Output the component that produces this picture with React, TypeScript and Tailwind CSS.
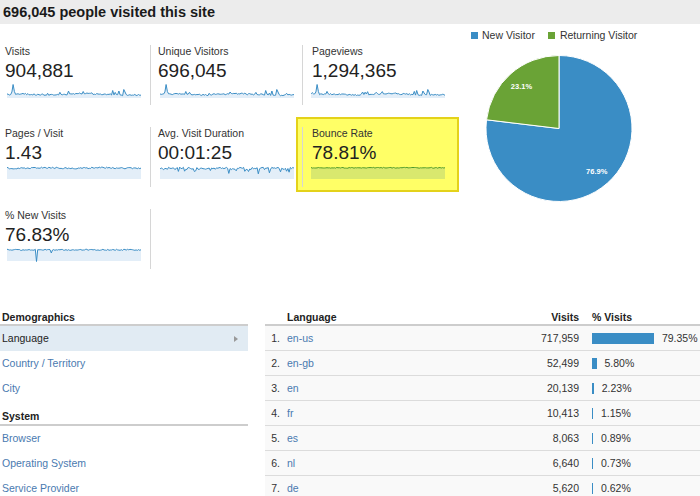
import React from "react";

function rng(seed: number) {
  let s = seed;
  return () => {
    s = (s * 16807) % 2147483647;
    return (s - 1) / 2147483646;
  };
}

type Kind = "low" | "high" | "noisy" | "flat" | "dip";

function makeSeries(kind: Kind, seed: number): number[] {
  const r = rng(seed);
  const n = 110;
  const out: number[] = [];
  for (let i = 0; i < n; i++) {
    let y = 0;
    if (kind === "low") {
      y = 10.6 + (r() - 0.5) * 1.4 - Math.sin(i / 9) * 0.5;
      if (i > 40 && i < 70) y -= 0.8;
      if (r() > 0.94) y -= 1.5 + r() * 1.5;
    } else if (kind === "high") {
      y = 2 + (r() - 0.5) * 1.4 + Math.sin(i / 7) * 0.3;
    } else if (kind === "noisy") {
      y = 2.4 + (r() - 0.5) * 2.6;
      if (r() > 0.9) y += 2 + r() * 2.5;
    } else if (kind === "flat") {
      y = 1.8 + (r() - 0.5) * 0.8;
    } else {
      y = 1.8 + (r() - 0.5) * 1.2;
    }
    out.push(y);
  }
  if (kind === "low") {
    out[4] = 8;
    out[5] = 0.5;
    out[6] = 7.5;
    out[86] = 6.5;
    out[91] = 7;
    out[95] = 5.5;
    out[96] = 8;
  }
  if (kind === "dip") {
    out[24] = 13.5;
    out[36] = 5;
  }
  return out.map((v) => Math.max(0.5, Math.min(13.5, v)));
}

function Spark({ kind, seed, green, className }: { kind: Kind; seed: number; green?: boolean; className: string }) {
  const W = 134;
  const H = 14;
  const pts = makeSeries(kind, seed);
  const step = W / (pts.length - 1);
  const line = pts.map((y, i) => `${i ? "L" : "M"}${(i * step).toFixed(1)} ${y.toFixed(1)}`).join(" ");
  const area = `${line} L${W} ${kind === "low" ? H : 13} L0 ${kind === "low" ? H : 13} Z`;
  return (
    <svg width={W} height={H} className={className}>
      <path d={area} fill={green ? "#d9e86e" : "#e3eef8"} />
      <path d={line} fill="none" stroke={green ? "#4e9a2b" : "#3a8dc5"} strokeWidth={1} />
    </svg>
  );
}

type Cell = { label: string; value: string; kind: Kind; seed: number; green?: boolean };

function Metric({ cell, col }: { cell: Cell; col: number }) {
  const box =
    col === 0
      ? "relative h-[60px] w-[151px] border-r border-[#d6d6d6] pl-[5px]"
      : col === 1
      ? "relative h-[60px] w-[152px] border-r border-[#d6d6d6] pl-[7px]"
      : "relative h-[60px] w-[157px] pl-[9px]";
  return (
    <div className={box}>
      <div className="text-[10.5px] leading-[13px] text-[#333]">{cell.label}</div>
      <div className="text-[19px] leading-[26px] text-[#222]">{cell.value}</div>
      <Spark
        kind={cell.kind}
        seed={cell.seed}
        green={cell.green}
        className={col === 2 ? "ml-[-1px] block" : "ml-[2px] block"}
      />
    </div>
  );
}

const rows: Cell[][] = [
  [
    { label: "Visits", value: "904,881", kind: "low", seed: 11 },
    { label: "Unique Visitors", value: "696,045", kind: "low", seed: 23 },
    { label: "Pageviews", value: "1,294,365", kind: "low", seed: 37 },
  ],
  [
    { label: "Pages / Visit", value: "1.43", kind: "high", seed: 41 },
    { label: "Avg. Visit Duration", value: "00:01:25", kind: "noisy", seed: 53 },
    { label: "Bounce Rate", value: "78.81%", kind: "flat", seed: 67, green: true },
  ],
  [{ label: "% New Visits", value: "76.83%", kind: "dip", seed: 71 }],
];

const languages = [
  { name: "en-us", visits: "717,959", pct: 79.35 },
  { name: "en-gb", visits: "52,499", pct: 5.8 },
  { name: "en", visits: "20,139", pct: 2.23 },
  { name: "fr", visits: "10,413", pct: 1.15 },
  { name: "es", visits: "8,063", pct: 0.89 },
  { name: "nl", visits: "6,640", pct: 0.73 },
  { name: "de", visits: "5,620", pct: 0.62 },
];

function SideLink({ label }: { label: string }) {
  return <div className="flex h-[25px] items-center pl-[2px] text-[#4a7ab0]">{label}</div>;
}

export default function App() {
  return (
    <div className="h-[496px] w-[700px] overflow-hidden bg-white font-['Liberation_Sans',Arial,sans-serif] text-[10.5px] leading-[13px] text-[#222]">
      {/* Title bar */}
      <div className="flex h-[24px] items-center bg-[#ececec] pl-[3px] text-[14.5px] font-bold text-[#1a1a1a]">
        696,045 people visited this site
      </div>

      <div className="flex h-[283px]">
        {/* Metrics */}
        <div className="flex w-[460px] flex-col gap-[22px] pt-[21px]">
          {rows.map((row, ri) => (
            <div key={ri} className="relative flex">
              {ri === 1 && (
                <div className="absolute left-[296px] top-[-10px] h-[75px] w-[163px] border-2 border-[#e4d21a] bg-[#ffff66]" />
              )}
              {row.map((c, ci) => (
                <Metric key={c.label} cell={c} col={ci} />
              ))}
            </div>
          ))}
        </div>

        {/* Pie */}
        <div className="flex-1">
          <div className="flex items-center pl-[11px] pt-[5px] text-[#333]">
            <span className="mr-[4px] h-[7px] w-[7px] bg-[#3a8dc5]" />
            New Visitor
            <span className="ml-[13px] mr-[5px] h-[7px] w-[7px] bg-[#6aa336]" />
            Returning Visitor
          </div>
          <svg width={240} height={200} className="mt-[6px] block">
            <path d="M99 80.5 L99 7.5 A73 73 0 1 1 26.52 71.8 Z" fill="#3a8dc5" stroke="#fff" strokeWidth={1} />
            <path d="M99 80.5 L26.52 71.8 A73 73 0 0 1 99 7.5 Z" fill="#6aa336" stroke="#fff" strokeWidth={1} />
            <text x={61.5} y={41} fill="#fff" fontSize={7.5} fontWeight="bold" textAnchor="middle">
              23.1%
            </text>
            <text x={136.7} y={125.5} fill="#fff" fontSize={7.5} fontWeight="bold" textAnchor="middle">
              76.9%
            </text>
          </svg>
        </div>
      </div>

      <div className="flex">
        {/* Sidebar */}
        <div className="w-[248px]">
          <div className="h-[19px] border-b-2 border-[#cdcdcd] pl-[2px] pt-[4px] font-bold">Demographics</div>
          <div className="flex h-[25px] items-center justify-between bg-[#e1ebf3] pl-[2px] pr-[10px] text-[#222]">
            Language
            <svg width={4} height={6}>
              <polygon points="0,0 4,3 0,6" fill="#999" />
            </svg>
          </div>
          <SideLink label="Country / Territory" />
          <SideLink label="City" />
          <div className="h-[25px] border-b-2 border-[#cdcdcd] pl-[2px] pt-[9px] font-bold">System</div>
          <SideLink label="Browser" />
          <SideLink label="Operating System" />
          <SideLink label="Service Provider" />
        </div>

        {/* Language table */}
        <div className="ml-[17px] flex-1">
          <div className="flex h-[19px] border-b-2 border-[#cdcdcd] pt-[4px] font-bold">
            <span className="w-[22px]" />
            <span className="flex-1">Language</span>
            <span className="w-[80px] text-right">Visits</span>
            <span className="w-[121px] pl-[13px]">% Visits</span>
          </div>
          {languages.map((l, i) => (
            <div key={l.name} className="flex h-[25px] items-center border-b border-[#dcdcdc] bg-[#f9f9f9]">
              <span className="w-[15px] text-right text-[#333]">{i + 1}.</span>
              <span className="ml-[7px] flex-1 text-[#4a7ab0]">{l.name}</span>
              <span className="w-[80px] text-right text-[#333]">{l.visits}</span>
              <span className="flex w-[121px] items-center pl-[13px] text-[#333]">
                <span className="h-[11px] bg-[#3a8dc5]" style={{ width: Math.max(1, l.pct * 0.78) }} />
                <span className="ml-[8px]">{l.pct.toFixed(2)}%</span>
              </span>
            </div>
          ))}
        </div>
      </div>
    </div>
  );
}
